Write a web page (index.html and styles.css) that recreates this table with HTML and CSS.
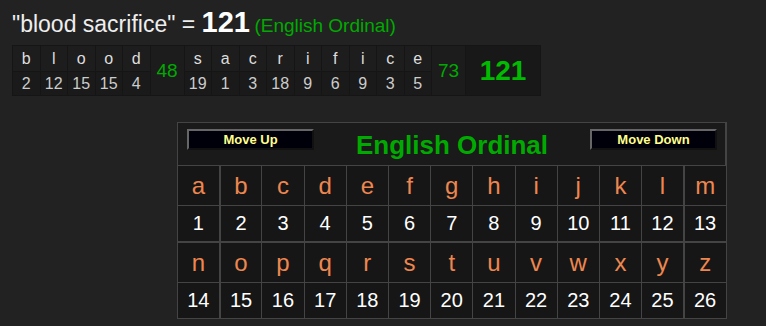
FILE: index.html
```html
<!DOCTYPE html>
<html lang="en">
<head>
    <meta charset="UTF-8">
    <title>blood sacrifice - English Ordinal</title>
    <link rel="stylesheet" href="styles.css">
</head>
<body>
    <div class="page">
        <div class="phrase-line">
            <span class="phrase">"blood sacrifice" = </span><span class="phrase-total">121</span>
            <span class="cipher-name">(English Ordinal)</span>
        </div>

        <!-- letter by letter breakdown -->
        <table class="breakdown">
            <tr class="bd-letters">
                <td>b</td><td>l</td><td>o</td><td>o</td><td>d</td>
                <td class="word-sum" rowspan="2">48</td>
                <td>s</td><td>a</td><td>c</td><td>r</td><td>i</td><td>f</td><td>i</td><td>c</td><td>e</td>
                <td class="word-sum" rowspan="2">73</td>
                <td class="grand-sum" rowspan="2">121</td>
            </tr>
            <tr class="bd-values">
                <td>2</td><td>12</td><td>15</td><td>15</td><td>4</td>
                <td>19</td><td>1</td><td>3</td><td>18</td><td>9</td><td>6</td><td>9</td><td>3</td><td>5</td>
            </tr>
        </table>

        <!-- cipher chart -->
        <table class="chart">
            <tr>
                <td class="chart-head" colspan="13">
                    <div class="head-bar">
                        <button class="move-btn">Move Up</button>
                        <span class="chart-title">English Ordinal</span>
                        <button class="move-btn">Move Down</button>
                    </div>
                </td>
            </tr>
            <tr class="ch-letters">
                <td>a</td><td>b</td><td>c</td><td>d</td><td>e</td><td>f</td><td>g</td><td>h</td><td>i</td><td>j</td><td>k</td><td>l</td><td>m</td>
            </tr>
            <tr class="ch-values split">
                <td>1</td><td>2</td><td>3</td><td>4</td><td>5</td><td>6</td><td>7</td><td>8</td><td>9</td><td>10</td><td>11</td><td>12</td><td>13</td>
            </tr>
            <tr class="ch-letters">
                <td>n</td><td>o</td><td>p</td><td>q</td><td>r</td><td>s</td><td>t</td><td>u</td><td>v</td><td>w</td><td>x</td><td>y</td><td>z</td>
            </tr>
            <tr class="ch-values">
                <td>14</td><td>15</td><td>16</td><td>17</td><td>18</td><td>19</td><td>20</td><td>21</td><td>22</td><td>23</td><td>24</td><td>25</td><td>26</td>
            </tr>
        </table>
    </div>
</body>
</html>
```

FILE: styles.css
```css
/* Base */
html,
body {
    margin: 0;
    background: #222;
    color: #eee;
    font-family: Arial, 'Liberation Sans', sans-serif;
}

.page {
    padding: 8px 12px;
}

/* Phrase heading */
.phrase-line {
    height: 37px;
    line-height: 28px;
    white-space: nowrap;
}

.phrase {
    font-size: 23px;
    color: #eee;
}

.phrase-total {
    font-size: 29px;
    font-weight: bold;
    color: #fff;
}

.cipher-name {
    font-size: 19px;
    color: #0a0;
}

/* Breakdown table */
.breakdown {
    border-collapse: separate;
    border-spacing: 1px;
    background: #151515;
    text-align: center;
}

.breakdown td {
    width: 26.5px;
    padding: 0;
    background: #1d1d1d;
    font-size: 16px;
}

.bd-letters td {
    height: 25px;
    color: #ddd;
}

.bd-values td {
    height: 23px;
    background: #1a1a1a;
    color: #ccc;
}

.breakdown .word-sum {
    width: 33px;
    background: #1c1c1c;
    font-size: 19px;
    color: #0a0;
}

.breakdown .grand-sum {
    width: 74px;
    background: #181818;
    font-size: 28px;
    font-weight: bold;
    color: #0b0;
}

/* Cipher chart */
.chart {
    margin: 26px 0 0 165px;
    width: 550px;
    table-layout: fixed;
    border-collapse: collapse;
    border: 1px solid #444;
    text-align: center;
}

.chart td {
    border: 1px solid #444;
    padding: 0;
    background: #161616;
}

.chart td:first-child {
    border-right-width: 2px;
}

.chart td:nth-child(12) {
    border-right-width: 2px;
}

.chart .chart-head {
    background: #1a1a1a;
    height: 42px;
    vertical-align: top;
}

.head-bar {
    display: flex;
    justify-content: space-between;
    align-items: flex-start;
    padding: 6px 8px 0 9px;
}

.move-btn {
    width: 127px;
    height: 21px;
    padding: 0;
    background: #00000a;
    border: 2px outset #666;
    color: #ffff8c;
    font-family: Arial, 'Liberation Sans', sans-serif;
    font-size: 13px;
    font-weight: bold;
}

.chart-title {
    font-size: 26px;
    font-weight: bold;
    color: #0a0;
    line-height: 30px;
    padding-top: 1px;
}

.ch-letters td {
    height: 39px;
    font-size: 24px;
    color: #ee8650;
}

.ch-values td {
    height: 35px;
    font-size: 20px;
    color: #fff;
}

.ch-values.split td {
    border-bottom-width: 2px;
}
```
